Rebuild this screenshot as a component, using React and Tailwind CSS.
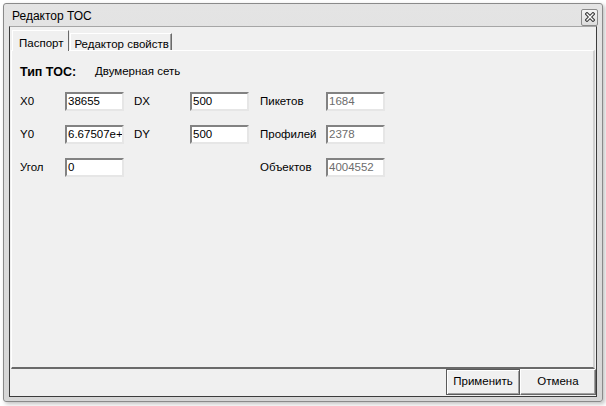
import React from 'react'

const font = { fontFamily: '"Liberation Sans", Arial, sans-serif' }

function Field({ value, disabled }) {
  return (
    <div
      className={`w-[59px] h-[19px] bg-white border-2 border-t-[#828282] border-l-[#828282] border-r-[#e6e6e6] border-b-[#e6e6e6] flex items-center px-[1px] text-[11.5px] leading-none overflow-hidden whitespace-nowrap ${
        disabled ? 'text-[#6d6d6d]' : 'text-black'
      }`}
    >
      {value}
    </div>
  )
}

function Label({ children, w }) {
  return <div className={`${w} text-[11.5px] text-black`}>{children}</div>
}

function CloseIcon() {
  return (
    <svg width="10" height="10" viewBox="0 0 10 10">
      <path d="M2 2 L8 8 M8 2 L2 8" stroke="#3a3a3a" strokeWidth="3.4" strokeLinecap="square" />
      <path d="M2 2 L8 8 M8 2 L2 8" stroke="#ffffff" strokeWidth="1.3" strokeLinecap="square" />
    </svg>
  )
}

export default function App() {
  const rows = [
    { l: 'X0', v: '38655', l2: 'DX', v2: '500', l3: 'Пикетов', v3: '1684' },
    { l: 'Y0', v: '6.67507e+', l2: 'DY', v2: '500', l3: 'Профилей', v3: '2378' },
    { l: 'Угол', v: '0', l3: 'Объектов', v3: '4004552' },
  ]

  return (
    <div className="w-[606px] h-[406px] bg-white" style={font}>
      <div className="ml-[3px] pt-[3px]">
        <div className="w-[600px] h-[399px] border border-[#8a8a8a] rounded-[3px] bg-gradient-to-b from-[#e4e4e4] to-[#d6d6d6] shadow-[2px_2px_4px_rgba(0,0,0,0.25)] flex flex-col px-[5px] pb-[4px]">
          {/* caption */}
          <div className="h-[22px] flex items-center justify-between">
            <span className="pl-[3px] pt-[2px] text-[12px] text-black">Редактор ТОС</span>
            <div className="w-[17px] h-[17px] mt-[4px] mr-[-1px] border border-[#8a8a8a] rounded-[2px] bg-gradient-to-b from-[#f4f4f4] to-[#dcdcdc] flex items-center justify-center">
              <CloseIcon />
            </div>
          </div>

          {/* client */}
          <div className="flex-1 flex flex-col bg-[#f0f0f0] border border-t-[#a6a6a6] border-l-[#3c3c3c] border-r-[#3c3c3c] border-b-[#3c3c3c]">
            <div className="flex-1 flex flex-col pt-[3px] pl-[1px] pr-[1px]">
              {/* tabs */}
              <div className="flex items-end h-[20px] pl-[1px]">
                <div className="relative z-10 h-[21px] -mb-px pl-[6px] pr-[5px] pt-[4px] bg-[#f0f0f0] border-t border-l border-r border-t-white border-l-white border-r-[#6a6a6a] text-[11.5px] text-black">
                  Паспорт
                </div>
                <div className="h-[17px] pl-[3px] pr-[2px] ml-[1px] pt-[2px] border-t border-l border-r border-t-white border-l-white border-r-[#6a6a6a] text-[11.5px] text-black shadow-[inset_-1px_0_0_#a0a0a0]">
                  Редактор свойств
                </div>
              </div>

              {/* page */}
              <div className="flex-1 border-t border-l border-r-2 border-b-2 border-t-white border-l-white border-r-[#d0d0d0] border-b-[#6a6a6a] pl-[8px] pt-[13px]">
                <div className="flex items-center h-[16px]">
                  <span className="w-[75px] text-[12.5px] font-bold text-black">Тип ТОС:</span>
                  <span className="text-[11.5px] text-black">Двумерная сеть</span>
                </div>
                <div className="mt-[12px] flex flex-col gap-[14px]">
                  {rows.map((r) => (
                    <div key={r.l3} className="flex items-center h-[19px]">
                      <Label w="w-[45px]">{r.l}</Label>
                      <Field value={r.v} />
                      <div className="w-[10px]" />
                      {r.l2 ? (
                        <>
                          <Label w="w-[56px]">{r.l2}</Label>
                          <Field value={r.v2} />
                        </>
                      ) : (
                        <div className="w-[115px]" />
                      )}
                      <div className="w-[11px]" />
                      <Label w="w-[66px]">{r.l3}</Label>
                      <Field value={r.v3} disabled />
                    </div>
                  ))}
                </div>
              </div>
            </div>

            {/* buttons */}
            <div className="h-[27px] flex justify-end items-start">
              <button className="w-[74px] h-[26px] border border-[#5a5a5a] bg-[#f0f0f0] shadow-[inset_1px_1px_0_#ffffff,inset_-1px_-1px_0_#a0a0a0] text-[11.5px] text-black">
                Применить
              </button>
              <button className="w-[76px] h-[26px] border border-t-white border-l-white border-r-[#6a6a6a] border-b-[#6a6a6a] bg-[#f0f0f0] shadow-[inset_-1px_-1px_0_#a0a0a0] text-[11.5px] text-black">
                Отмена
              </button>
            </div>
          </div>
        </div>
      </div>
    </div>
  )
}
